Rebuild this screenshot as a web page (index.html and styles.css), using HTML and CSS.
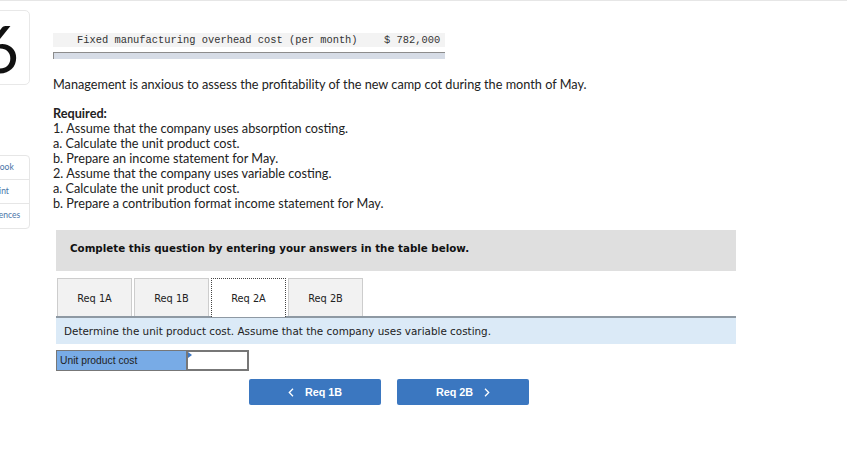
FILE: index.html
```html
<!DOCTYPE html>
<html>
<head>
<meta charset="utf-8">
<link rel="stylesheet" href="styles.css">
</head>
<body>
<div class="page">
  <aside class="side">
    <div class="num-card"><span class="num">6</span></div>
    <div class="side-card">
      <div class="side-item">eBook</div>
      <div class="side-item">Print</div>
      <div class="side-item">References</div>
    </div>
  </aside>
  <main class="main">
    <div class="data-row">
      <span class="data-label">Fixed manufacturing overhead cost (per month)</span>
      <span class="data-value">$ 782,000</span>
    </div>
    <div class="data-bar"></div>
    <p class="intro">Management is anxious to assess the profitability of the new camp cot during the month of May.</p>
    <div class="required">
      <div class="req-title">Required:</div>
      <div>1. Assume that the company uses absorption costing.</div>
      <div>a. Calculate the unit product cost.</div>
      <div>b. Prepare an income statement for May.</div>
      <div>2. Assume that the company uses variable costing.</div>
      <div>a. Calculate the unit product cost.</div>
      <div>b. Prepare a contribution format income statement for May.</div>
    </div>
    <section class="question">
      <div class="q-head">Complete this question by entering your answers in the table below.</div>
      <div class="tabs">
        <div class="tab">Req 1A</div>
        <div class="tab">Req 1B</div>
        <div class="tab tab-active">Req 2A</div>
        <div class="tab">Req 2B</div>
      </div>
      <div class="instr">Determine the unit product cost. Assume that the company uses variable costing.</div>
      <div class="answer-row">
        <div class="answer-label">Unit product cost</div>
        <div class="answer-input"><span class="flag"></span></div>
      </div>
      <div class="nav">
        <button class="nav-btn"><svg class="chev" width="6" height="9" viewBox="0 0 6 9"><path d="M5 0.8 L1.3 4.5 L5 8.2" fill="none" stroke="#fff" stroke-width="1.3"/></svg><span>Req 1B</span></button>
        <button class="nav-btn"><span>Req 2B</span><svg class="chev" width="6" height="9" viewBox="0 0 6 9"><path d="M1 0.8 L4.7 4.5 L1 8.2" fill="none" stroke="#fff" stroke-width="1.3"/></svg></button>
      </div>
    </section>
  </main>
</div>
</body>
</html>
```

FILE: styles.css
```css
* { box-sizing: border-box; }
html, body { margin: 0; padding: 0; background: #fff; }
body {
  width: 847px;
  height: 471px;
  overflow: hidden;
  border-top: 1px solid #e6e6e6;
  font-family: "Lato", "Liberation Sans", sans-serif;
  color: #222;
}
.page {
  display: flex;
  align-items: flex-start;
}
.side {
  width: 53px;
  flex: none;
  padding-top: 9px;
}
.num-card {
  width: 62px;
  height: 75px;
  margin-left: -32px;
  border: 1px solid #e8e8e8;
  border-radius: 5px;
  display: flex;
  align-items: center;
  justify-content: flex-end;
  padding-right: 10px;
  overflow: hidden;
}
.num {
  font-family: "Lato", "Liberation Sans", sans-serif;
  font-size: 66px;
  line-height: 66px;
  color: #111;
  font-weight: 400;
}
.side-card {
  margin-top: 70px;
  width: 62px;
  margin-left: -32px;
  border: 1px solid #e6e6e6;
  border-radius: 4px;
  overflow: hidden;
}
.side-item {
  height: 24px;
  line-height: 23px;
  font-size: 8.5px;
  color: #4a74a8;
  white-space: nowrap;
  border-bottom: 1px solid #e6e6e6;
}
.side-item:nth-child(1) { text-indent: 21px; }
.side-item:nth-child(2) { text-indent: 22px; }
.side-item:nth-child(3) { text-indent: 10px; }
.side-item:last-child { border-bottom: none; }

.main {
  flex: 1;
  padding-top: 32px;
}
.data-row {
  width: 392px;
  height: 14px;
  background: #f3f3f3;
  display: flex;
  align-items: center;
  font-family: "Liberation Mono", monospace;
  font-size: 10.4px;
  color: #333;
  padding-left: 24px;
}
.data-label { width: 307px; white-space: pre; }
.data-value { white-space: pre; }
.data-bar {
  width: 392px;
  height: 7px;
  margin-top: 5px;
  background: #d6dce6;
  border-top: 1px solid #8c8c8c;
  border-left: 1px solid #8c8c8c;
}
.intro {
  margin: 18px 0 0 0;
  font-size: 12.7px;
  line-height: 15px;
  color: #222;
}
.required {
  margin-top: 14px;
  font-size: 12.7px;
  line-height: 15px;
  color: #222;
}
.req-title { font-weight: 700; }

.question {
  margin-top: 19px;
  margin-left: 3px;
  width: 680px;
  font-family: "DejaVu Sans", Verdana, sans-serif;
}
.q-head {
  height: 41px;
  background: #dfdfdf;
  padding-left: 14px;
  padding-bottom: 6px;
  display: flex;
  align-items: center;
  font-weight: 700;
  font-size: 10.3px;
  color: #111;
}
.tabs {
  display: flex;
  gap: 2px;
  margin-top: 7px;
  padding-left: 1px;
  position: relative;
  z-index: 1;
}
.tab {
  width: 75px;
  height: 38px;
  background: #f2f2f2;
  border: 1px solid #cdcdcd;
  border-bottom: none;
  display: flex;
  align-items: center;
  justify-content: center;
  padding-top: 1px;
  font-size: 9.8px;
  color: #222;
}
.tab-active {
  background: #fff;
  border: 1px dotted #444;
  border-bottom: none;
  height: 39px;
  margin-bottom: -1px;
}
.instr {
  height: 28px;
  background: #dbeaf7;
  border-top: 2px solid #8e99a3;
  display: flex;
  align-items: center;
  padding-left: 8px;
  font-size: 10.4px;
  color: #222;
}
.answer-row {
  display: flex;
  margin-top: 6px;
  height: 21px;
}
.answer-label {
  width: 130px;
  background: #78abe6;
  border: 1px solid #777;
  border-right: none;
  font-family: "Liberation Sans", Arial, sans-serif;
  font-size: 10.3px;
  color: #222;
  display: flex;
  align-items: center;
  padding-left: 3px;
}
.answer-input {
  width: 63px;
  background: #fff;
  border: 2px solid #777;
  position: relative;
}
.flag {
  position: absolute;
  left: 0;
  top: 0;
  width: 0;
  height: 0;
  border-top: 3px solid transparent;
  border-bottom: 3px solid transparent;
  border-left: 4px solid #3f78c2;
}
.nav {
  display: flex;
  gap: 16px;
  margin-top: 8px;
  padding-left: 193px;
}
.nav-btn {
  width: 132px;
  height: 26px;
  border: none;
  border-radius: 2px;
  background: #3b77c0;
  color: #fff;
  font-family: "Liberation Sans", Arial, sans-serif;
  font-weight: 700;
  font-size: 10.8px;
  display: flex;
  align-items: center;
  justify-content: center;
  gap: 11px;
  padding: 0;
}
.chev { display: block; }
```
